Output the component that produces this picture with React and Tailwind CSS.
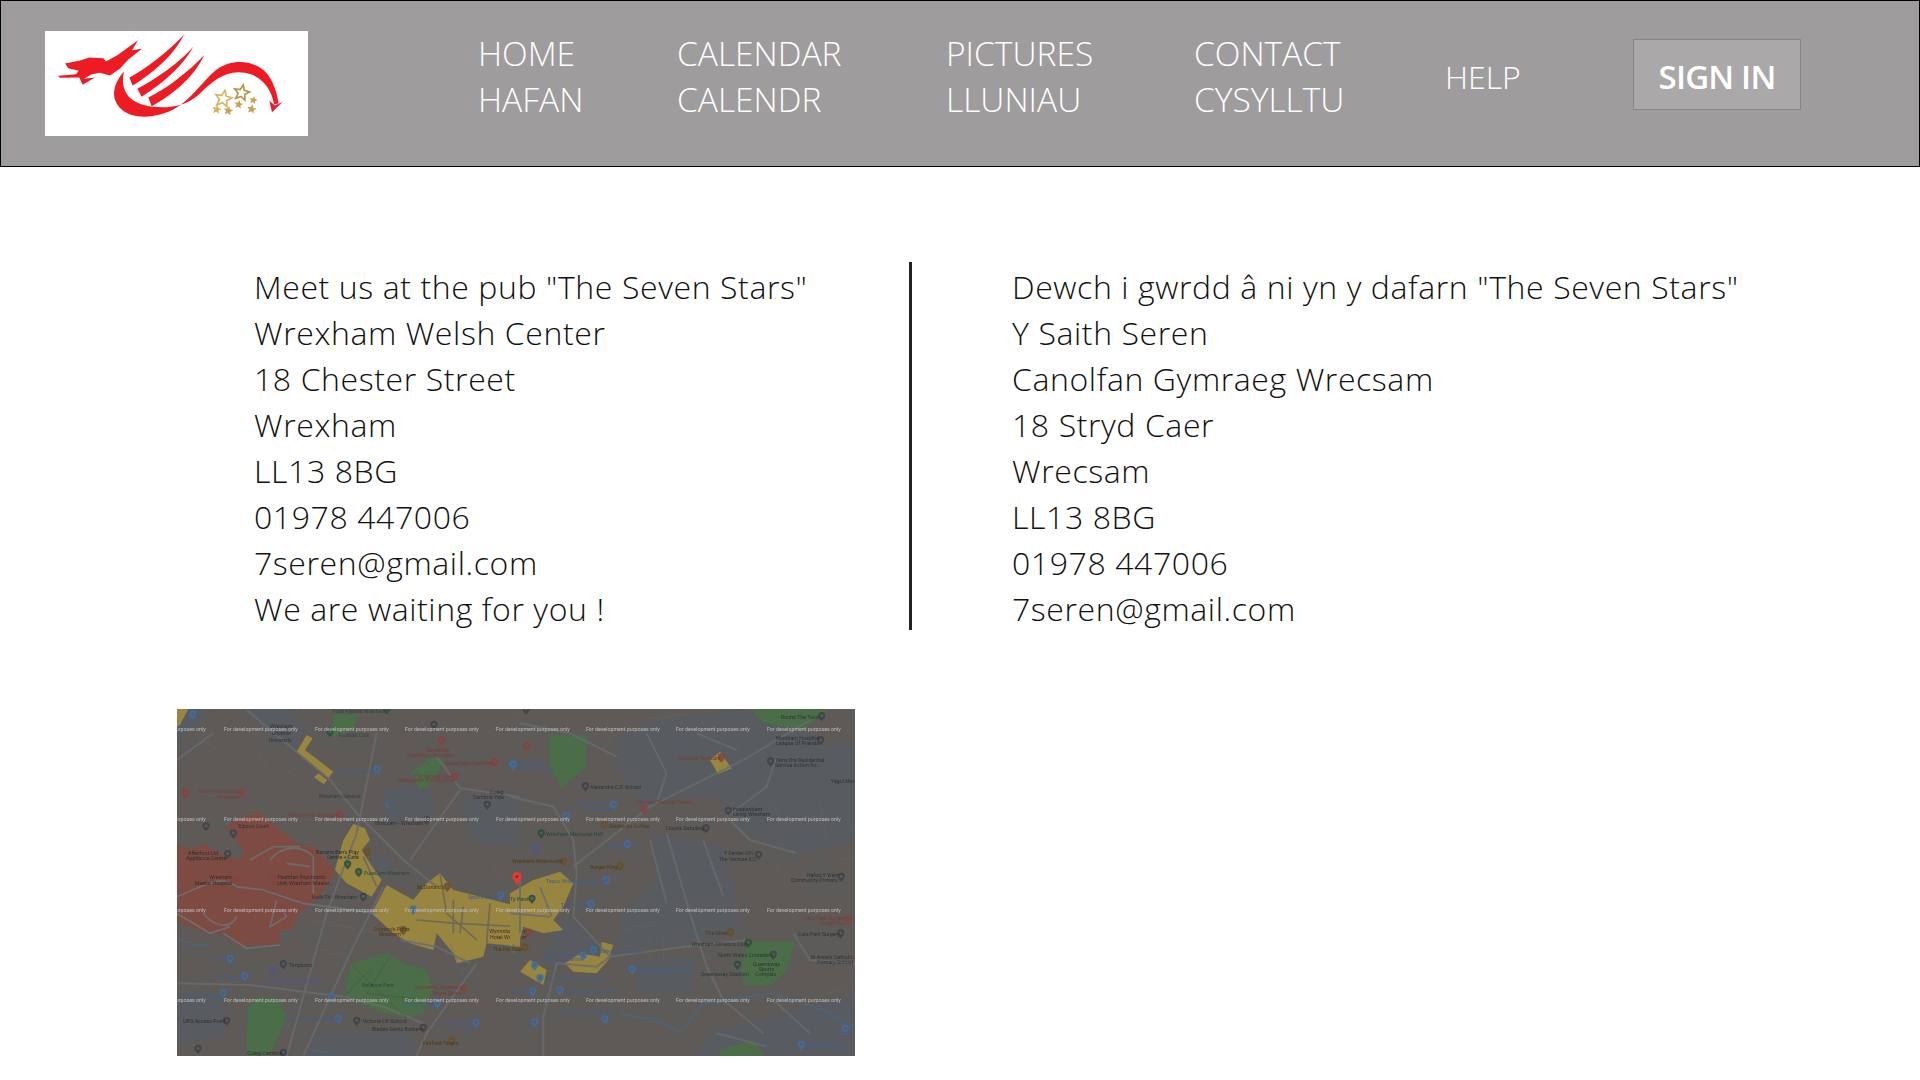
import React from 'react';

const FONT = "font-['Open_Sans','Noto_Sans',sans-serif]";

const english = [
  'Meet us at the pub "The Seven Stars"',
  'Wrexham Welsh Center',
  '18 Chester Street',
  'Wrexham',
  'LL13 8BG',
  '01978 447006',
  '7seren@gmail.com',
  'We are waiting for you !',
];

const welsh = [
  'Dewch i gwrdd â ni yn y dafarn "The Seven Stars"',
  'Y Saith Seren',
  'Canolfan Gymraeg Wrecsam',
  '18 Stryd Caer',
  'Wrecsam',
  'LL13 8BG',
  '01978 447006',
  '7seren@gmail.com',
];

const star = (cx, cy, r, fill, stroke) => {
  const pts = [];
  for (let i = 0; i < 10; i++) {
    const rad = i % 2 === 0 ? r : r * 0.45;
    const a = -Math.PI / 2 + (i * Math.PI) / 5 + 0.2;
    pts.push(`${cx + rad * Math.cos(a)},${cy + rad * Math.sin(a)}`);
  }
  return <polygon key={`${cx}-${cy}`} points={pts.join(' ')} fill={fill} stroke={stroke} strokeWidth={stroke ? 5 : 0} />;
};

const Logo = () => (
  <svg viewBox="135 93 789 314" className="w-[263px] h-[105px] bg-white shrink-0">
    <g fill="#ed1c24">
      <path d="M195 190 L240 181 L268 172 L310 174 L318 184 L352 165 L380 145 L414 120 L396 150 L426 146 L385 178 L360 205 L330 226 L300 218 L275 222 L252 236 L285 232 L248 254 L238 232 L180 233 L174 227 L228 222 L236 212 L205 204 Z" />
      <path d="M372 214 C340 250 328 295 365 328 C400 358 465 355 520 328 C575 298 605 245 650 208 C700 172 770 180 805 225 C825 255 832 285 836 310 L822 312 C815 270 790 228 735 218 C680 208 640 240 600 280 C560 318 510 325 460 320 C410 315 355 290 372 214 Z" />
      <path d="M808 302 L825 316 L848 305 L816 336 Z" />
      <path d="M388 232 C440 205 510 150 552 103 C525 160 465 215 398 256 Z" />
      <path d="M412 266 C470 235 535 190 580 140 C550 195 495 245 425 290 Z" />
      <path d="M445 292 C500 265 565 215 612 165 C585 225 525 280 455 318 Z" />
    </g>
    <g>
      {star(725, 278, 24, 'none', '#b8924a')}
      {star(670, 296, 26, 'none', '#d9b45c')}
      {star(760, 300, 13, '#c9a24f')}
      {star(716, 313, 14, '#c9a24f')}
      {star(650, 328, 15, '#d9b45c')}
      {star(685, 332, 15, '#c9a24f')}
      {star(755, 327, 15, '#c9a24f')}
    </g>
  </svg>
);

// map is drawn in the coordinates of two 3x crops, left and right half
const roads = [
  'M20 850 L240 855 L520 890 L640 920 L760 970',
  'M480 240 L560 340 L700 480 L800 560',
  'M870 270 L720 480',
  'M1050 290 L870 265 L800 170',
  'M640 560 L540 760 L400 1068',
  'M230 30 L480 240',
  'M20 180 L130 100',
  'M920 790 L770 1000 L740 1068',
  'M620 100 L560 400 L470 640 L350 1068',
  'M690 720 L800 740 L900 790',
];

const redRoads = [
  'M20 590 C100 560 150 520 200 560 L280 570 L400 610 L620 640',
  'M300 480 C330 440 390 430 430 470 L430 580',
  'M320 600 L300 680 L350 650 L330 620',
  'M100 640 C130 680 180 690 200 650',
  'M240 480 L310 440 L390 440 M350 490 L420 500',
  'M20 640 L120 700 L180 680',
  'M160 700 L230 745 L330 735',
];

const yellowRoads = [
  'M810 520 L830 640 L920 720',
  'M850 600 L850 700',
  'M880 620 L870 700',
  'M960 610 L950 730',
  'M1030 620 L1030 760',
  'M740 660 L860 670 L1050 680',
  'M580 470 L620 560',
];

const roadsRight = [
  'M0 290 L130 320 L190 420 L200 520 L190 650 L300 770 L260 800 L140 790 L100 950 L100 1068',
  'M190 500 L420 320 L700 180 L900 60',
  'M440 310 L470 220 L410 100',
  'M470 400 L540 640 L590 800 L640 900 L760 1000',
  'M300 770 L520 740 L720 720',
  'M850 700 L900 780 L1035 790',
  'M650 350 L770 260 L800 170 M660 360 L720 420 L860 460',
  'M580 420 L640 590 M420 420 L470 610',
  'M30 70 L180 100 L320 170',
  'M560 100 L680 150 M790 900 L900 1000 M620 1000 L770 1040',
  'M30 540 L30 700 M90 560 L125 650 M0 640 L120 650',
];

const pins = [
  [68, 45, '#3b6ea8'], [480, 98, '#25503c'], [650, 30, '#25503c'], [792, 76, '#3d4348'], [815, 123, '#8e3f3a'], [974, 187, '#8e3f3a'],
  [1030, 195, '#3b6ea8'], [622, 210, '#3b6ea8'], [854, 232, '#8e3f3a'], [216, 280, '#8e3f3a'], [46, 282, '#8e3f3a'], [952, 316, '#3d4348'],
  [510, 346, '#8e3f3a'], [770, 362, '#3d4348'], [108, 380, '#3d4348'], [190, 402, '#3d4348'], [173, 464, '#3d4348'], [592, 458, '#6b4f22'],
  [533, 495, '#25503c'], [566, 518, '#25503c'], [193, 538, '#8e3f3a'], [308, 540, '#8e3f3a'], [580, 592, '#3d4348'], [832, 562, '#6b4f22'],
  [992, 588, '#3b6ea8'], [730, 630, '#3b6ea8'], [338, 628, '#8e3f3a'], [700, 692, '#6b4f22'], [180, 778, '#3b6ea8'], [340, 794, '#3d4348'],
  [310, 814, '#4d5590'], [224, 830, '#3b6ea8'], [882, 868, '#8e3f3a'], [160, 882, '#3b6ea8'], [484, 892, '#3b6ea8'], [802, 912, '#3b6ea8'],
  [505, 958, '#3b6ea8'], [170, 964, '#3d4348'], [560, 964, '#3d4348'], [918, 970, '#3b6ea8'], [760, 985, '#3d4348'], [845, 1026, '#6b4f22'],
  [84, 1048, '#3d4348'], [340, 1060, '#3d4348'],
];

const pinsRight = [
  [48, 30, '#3d4348'], [935, 50, '#3d4348'], [932, 122, '#3d4348'], [50, 140, '#8e3f3a'], [634, 174, '#8e3f3a'], [782, 186, '#3d4348'],
  [8, 196, '#3b6ea8'], [226, 260, '#3d4348'], [310, 316, '#3b6ea8'], [402, 330, '#8e3f3a'], [655, 334, '#3d4348'], [168, 350, '#3b6ea8'],
  [282, 376, '#6b4f22'], [588, 386, '#3d4348'], [94, 402, '#25503c'], [352, 434, '#3b6ea8'], [76, 448, '#4d5590'], [746, 466, '#3d4348'],
  [160, 486, '#6b4f22'], [330, 500, '#6b4f22'], [994, 532, '#3d4348'], [288, 542, '#3b6ea8'], [66, 598, '#25503c'], [243, 614, '#3b6ea8'],
  [1016, 660, '#8e3f3a'], [992, 702, '#3d4348'], [662, 698, '#6b4f22'], [55, 700, '#8e3f3a'], [715, 730, '#25503c'], [45, 744, '#6b4f22'],
  [250, 752, '#3b6ea8'], [220, 768, '#3b6ea8'], [790, 766, '#3d4348'], [682, 796, '#25503c'], [366, 810, '#3b6ea8'], [74, 798, '#3b6ea8'],
  [90, 836, '#3b6ea8'], [150, 872, '#3b6ea8'], [68, 876, '#3b6ea8'], [285, 958, '#3b6ea8'], [74, 968, '#3b6ea8'], [1006, 988, '#3b6ea8'],
  [874, 1036, '#3b6ea8'],
];

const labels = [
  ['Total Fitness Wrexham', 486, 38, '#2b4a3a'], ['Wrexham', 300, 85, '#2f3438'], ['Glyndwr', 306, 106, '#2f3438'], ['University', 296, 126, '#2f3438'],
  ['Football Club', 505, 111, '#2b4a3a'], ['Rowlands', 768, 155, '#7a3c38'], ['Pharmacy Rhosddu', 712, 172, '#7a3c38'], ['Coed Celyn Hospital', 826, 194, '#7a3c38'],
  ['Jewson Wrexham', 494, 218, '#3f5f8c'], ['The Lemon Tree', 732, 233, '#7a3c38'], ['Restaurant With Rooms', 684, 247, '#7a3c38'], ['Total Orthodontics', 82, 280, '#7a3c38'],
  ['Wrexham', 142, 296, '#7a3c38'], ['Wrexham General', 446, 294, '#3a3d40'], ['Coleg', 960, 282, '#2f3438'], ['Cambria Yale', 908, 298, '#2f3438'],
  ['Premier Inn Wrexham', 354, 350, '#7a3c38'], ['Wrecsam - Wrexham', 614, 376, '#2f3438'], ['Edison Court', 205, 384, '#2f3438'], ['Banana Ben\'s Play', 438, 463, '#2b2f30'],
  ['Centre + Cafe', 470, 477, '#2b2f30'], ['Afterfoot Ltd', 54, 464, '#2b2f30'], ['Appliance Centre', 48, 480, '#2b2f30'], ['PureGym Wrexham', 582, 526, '#26483a'],
  ['Wrexham', 118, 538, '#3a2a28'], ['Maelor Hospital', 74, 554, '#3a2a28'], ['Heddfan Psychiatric', 324, 538, '#3a2a28'], ['Unit, Wrexham Maelor...', 322, 555, '#3a2a28'],
  ['McDonald\'s', 740, 568, '#4f3a18'], ['Sports Direct', 894, 596, '#3f5f8c'], ['Kwik Fit - Wrexham', 426, 598, '#2f3438'], ['Domino\'s Pizza', 612, 692, '#4f3a18'],
  ['Wrexham', 626, 708, '#4f3a18'], ['Wynnstay Arms', 958, 700, '#4f2a28'], ['Hotel Wrexham', 960, 716, '#4f2a28'], ['The Fat Boar', 968, 752, '#4f3a18'],
  ['ALDI', 136, 784, '#3f5f8c'], ['Timpsons', 356, 800, '#2f3438'], ['Morrisons', 144, 838, '#3f5f8c'], ['Morrisons Petrol Station', 286, 848, '#4d5590'],
  ['Bellevue Park', 576, 862, '#2b4a3a'], ['Rowlands Pharmacy', 736, 868, '#7a3c38'], ['Chapel Street', 780, 884, '#7a3c38'], ['Bryn Offa Stores', 40, 890, '#3f5f8c'],
  ['Chalo Polska', 702, 918, '#3f5f8c'], ['UPS Access Point', 40, 970, '#2b2f30'], ['Victoria Premier Stores', 338, 964, '#3f5f8c'], ['Victoria CP School', 578, 970, '#2f3438'],
  ['Co-op Food -', 818, 972, '#3f5f8c'], ['Poplar Road', 826, 988, '#3f5f8c'], ['Blades Gents Barbers', 606, 992, '#2f3438'], ['Fairfield Tavern', 758, 1034, '#4f3a18'],
  ['Coleg Cambria', 232, 1064, '#2b2f30'],
];

const labelsRight = [
  ['Round The Twist', 812, 58, '#2f3438'], ['Wrexham Hospital', 797, 121, '#2f3438'], ['League Of Friends', 798, 136, '#2f3438'], ['Absolute Footcare', 502, 181, '#7a3c38'],
  ['Tainy Dre Residential', 795, 186, '#2f3438'], ['Service Action for...', 795, 200, '#2f3438'], ['Nightingale', 24, 195, '#3f5f8c'], ['House Hospice', 24, 211, '#3f5f8c'],
  ['Alexandra C.P. School', 240, 266, '#2f3438'], ['Yagol Morgan', 962, 250, '#2f3438'], ['Aldi Wrexham', 196, 316, '#3f5f8c'], ['Superstore', 224, 332, '#3f5f8c'],
  ['Hillcrest Medical Centre', 378, 312, '#7a3c38'], ['Independent', 668, 334, '#2f3438'], ['Living Wrexham', 668, 348, '#2f3438'], ['Starbucks Coffee', 296, 383, '#4f3a18'],
  ['Lloyd\'s Detailing', 468, 391, '#2f3438'], ['Wrexham Memorial Hall', 108, 408, '#26483a'], ['Nickies', 290, 440, '#3f5f8c'], ['Y Fenter CP/', 642, 466, '#2f3438'],
  ['The Venture ICC', 626, 482, '#2f3438'], ['Wrexham Waterworld', 6, 490, '#4f3a18'], ['Burger King', 240, 506, '#4f3a18'], ['Hafod Y Wern', 890, 532, '#2f3438'],
  ['Community Primary...', 842, 546, '#2f3438'], ['Tesco Wrexham Car Park', 108, 548, '#3f5f8c'], ['Ty Pawb', 0, 604, '#26483a'], ['Tesco Extra', 152, 620, '#3f5f8c'],
  ['Cala Park Surgery:', 882, 660, '#7a3c38'], ['Dr MM Rao', 930, 674, '#7a3c38'], ['Cala Park Surgery', 864, 708, '#2f3438'], ['The Diner', 586, 705, '#4f3a18'],
  ['Wrexham Athletics Club', 544, 737, '#2b3a34'], ['Marks and Spencer', 264, 760, '#3f5f8c'], ['Eagles Meadow', 102, 767, '#3f5f8c'], ['Shopping Centre', 100, 782, '#3f5f8c'],
  ['North Wales Crusaders', 624, 772, '#2b3a34'], ['St Anne\'s Catholic', 902, 776, '#2f3438'], ['Primary School', 922, 792, '#2f3438'], ['Queensway', 728, 798, '#2b3a34'],
  ['Sports', 746, 812, '#2b3a34'], ['Complex', 736, 828, '#2b3a34'], ['Queensway Stadium', 572, 828, '#2b3a34'], ['Travis Perkins Wrexham', 382, 816, '#3f5f8c'],
  ['Euro Car Parts, Wrexham', 104, 842, '#3f5f8c'], ['Toolstation Wrexham', 164, 878, '#3f5f8c'], ['Matalan', 2, 882, '#3f5f8c'], ['Wolseley Plumb & Parts', 152, 940, '#3f5f8c'],
  ['Lidl', 40, 974, '#3f5f8c'], ['asylum designs', 888, 1042, '#3f5f8c'],
];

const Pin = ({ x, y, c }) => (
  <g opacity="0.85">
    <path d={`M${x - 11} ${y - 3} a11 11 0 1 1 22 0 c0 7 -7 11 -11 17 c-4 -6 -11 -10 -11 -17 Z`} fill={c} />
    <circle cx={x} cy={y - 3} r="4.5" fill="#5d5b5a" />
  </g>
);

const Labels = ({ items }) =>
  items.map(([text, x, y, c]) => (
    <text key={`${text}-${x}`} x={x} y={y} fill={c} fontSize="16" fontFamily="Roboto, sans-serif">
      {text}
    </text>
  ));

const watermarkRows = [20, 110, 201, 291];
const watermarkCols = [-45, 47, 138, 228, 319, 409, 499, 590];

const MapImage = () => (
  <svg viewBox="0 0 678 347" className="w-[678px] h-[347px] block blur-[0.5px]">
    <rect width="678" height="347" fill="#5e5a57" />
    {/* left half */}
    <g transform="translate(-7 -9) scale(0.3333)">
      <g fill="#585b5f">
        <path d="M230 27 L360 27 L420 110 L380 150 L300 120 Z" />
        <path d="M20 890 L160 890 L160 1010 L20 1030 Z" />
        <path d="M880 290 L1050 290 L1050 440 L930 430 L880 360 Z" />
        <path d="M590 480 L660 470 L670 530 L610 520 Z" />
        <path d="M640 270 L780 250 L800 350 L640 370 Z" />
        <path d="M420 1000 L720 1000 L740 1068 L420 1068 Z" />
        <path d="M20 27 L130 27 L60 100 L20 130 Z" />
      </g>
      <path d="M20 430 L55 450 L105 432 L160 465 L210 480 L225 455 L165 378 L262 335 L385 432 L440 445 L497 515 L440 600 L385 640 L365 690 L330 690 L328 735 L270 735 L215 740 L150 700 L100 695 L20 665 Z" fill="#7e4b43" />
      <g fill="#98853f">
        <path d="M380 155 L410 105 L428 115 L405 150 L490 215 L475 235 Z" />
        <path d="M432 232 L445 220 L472 240 L462 253 Z" />
        <path d="M20 27 L55 27 L30 75 L20 80 Z" />
        <path d="M495 510 L520 420 L550 372 L585 385 L600 420 L575 450 L600 490 L635 540 L605 590 L530 550 Z" />
        <path d="M605 640 L650 555 L730 600 L770 550 L810 520 L850 570 L970 600 L1050 620 L1050 740 L950 730 L940 770 L860 790 L850 760 L800 700 L790 750 L720 730 L670 700 Z" />
      </g>
      <g fill="#4b6d48">
        <path d="M490 45 L565 45 L550 90 L485 110 Z" />
        <path d="M725 215 L780 175 L830 180 L770 265 L745 265 Z" />
        <path d="M540 790 L655 760 L700 790 L770 810 L790 870 L760 940 L710 955 L630 935 L525 890 Z" />
        <path d="M232 925 L265 890 L320 895 L350 950 L300 1068 L230 1068 Z" />
      </g>
      <path d="M165 362 L180 372 L170 376 Z M645 300 L662 325 L648 322 Z" fill="#3f6a94" />
      <path d="M20 715 L60 735 L110 735 M420 1050 L480 1060" stroke="#3f6a94" strokeWidth="3" fill="none" />
      <g stroke="#696c6f" strokeWidth="6" fill="none" opacity="0.8">
        {roads.map((d) => <path key={d} d={d} />)}
      </g>
      <g stroke="#6b7478" strokeWidth="5" fill="none" opacity="0.85">
        {redRoads.map((d) => <path key={d} d={d} />)}
      </g>
      <g stroke="#70695a" strokeWidth="5" fill="none">
        {yellowRoads.map((d) => <path key={d} d={d} />)}
      </g>
      <g stroke="#666767" strokeWidth="2" fill="none" opacity="0.7">
        <path d="M100 120 L170 175 M250 130 L300 220 M340 230 L380 200 M960 480 L1000 540 M430 660 L620 700 M460 750 L540 770 M840 730 L880 830 M950 100 L1050 40 M30 1000 L100 1060" />
      </g>
      <path d="M540 790 L710 955 M600 810 L520 890 M660 770 L590 880 L760 900" stroke="#3f5c40" strokeWidth="2" fill="none" />
      {pins.map(([x, y, c]) => <Pin key={`${x}-${y}`} x={x} y={y} c={c} />)}
      <Labels items={labels} />
    </g>
    {/* right half */}
    <g transform="translate(333 -9) scale(0.3333)">
      <g fill="#585b5f">
        <path d="M320 110 L450 60 L720 27 L960 130 L1035 130 L1035 420 L860 470 L700 390 L640 300 L520 280 L400 330 L320 200 Z" />
        <path d="M430 400 L640 440 L700 700 L560 720 L340 760 L330 640 L440 540 Z" />
        <path d="M380 780 L560 770 L540 880 L380 880 Z" />
        <path d="M600 1000 L1035 880 L1035 1068 L560 1068 Z" />
        <path d="M120 660 L190 660 L300 760 L200 780 L120 740 Z" />
        <path d="M0 300 L30 300 L30 420 L0 420 Z" />
      </g>
      <g fill="#98853f">
        <path d="M0 580 L70 540 L150 515 L190 550 L160 620 L130 660 L160 690 L100 700 L40 680 L30 720 L0 740 Z" />
        <path d="M600 180 L630 155 L665 205 L625 222 Z" />
        <path d="M165 790 L210 760 L270 770 L275 725 L310 735 L295 780 L260 820 L190 815 Z" />
        <path d="M30 815 L60 780 L110 810 L100 855 Z" />
      </g>
      <g fill="#4b6d48">
        <path d="M118 105 L230 105 L228 200 L155 265 L118 200 Z" />
        <path d="M720 27 L960 27 L880 90 L760 70 Z" />
        <path d="M715 725 L855 725 L830 810 L780 855 L700 855 L695 790 Z" />
        <path d="M630 1050 L730 1020 L760 1068 L630 1068 Z" />
      </g>
      <path d="M330 940 L430 960 L510 995 L580 910 L780 880 L940 930 L1035 980" stroke="#3f6a94" strokeWidth="3" fill="none" />
      <g stroke="#696c6f" strokeWidth="6" fill="none" opacity="0.8">
        {roadsRight.map((d) => <path key={d} d={d} />)}
      </g>
      <g stroke="#666767" strokeWidth="2" fill="none" opacity="0.7">
        <path d="M420 60 L530 40 M280 150 L310 100 M350 170 L380 130 M620 280 L680 250 M780 290 L820 380 M930 310 L950 420 M1010 400 L1035 390 M980 480 L1030 470 M790 480 L810 520 M420 700 L420 790 M460 710 L460 790 M340 690 L450 670 M250 590 L250 620 M900 900 L1035 850 M1020 800 L1030 900 M370 970 L400 990" />
      </g>
      {pinsRight.map(([x, y, c]) => <Pin key={`r-${x}-${y}`} x={x} y={y} c={c} />)}
      <Labels items={labelsRight} />
    </g>
    {/* main marker */}
    <path d="M340 163 a4.6 4.6 0 0 0 -4.6 4.6 c0 3.6 3.2 4.8 4.6 9.4 c1.4 -4.6 4.6 -5.8 4.6 -9.4 a4.6 4.6 0 0 0 -4.6 -4.6 Z" fill="#e03c36" />
    <circle cx="340" cy="167.6" r="1.2" fill="#7a1a16" />
    {watermarkRows.map((y) =>
      watermarkCols.map((x) => (
        <text key={`${x}-${y}`} x={x} y={y + 2} fontSize="5.3" fill="#c0bebc" fontFamily="Roboto, sans-serif">
          For development purposes only
        </text>
      ))
    )}
  </svg>
);

const NavLink = ({ top, bottom, className }) => (
  <a className={`block mb-[15px] text-white text-[33.5px] leading-[46px] font-light ${className}`}>
    <div>{top}</div>
    <div>{bottom}</div>
  </a>
);

const TextBlock = ({ lines }) => (
  <div className="pt-[2px] -mb-[2px] text-[32px] leading-[46px] font-light text-[#111] tracking-[0.6px] whitespace-nowrap">
    {lines.map((line) => (
      <div key={line}>{line}</div>
    ))}
  </div>
);

export default function App() {
  return (
    <div className={`${FONT} bg-white min-h-[1080px] overflow-hidden`}>
      <header className="h-[167px] bg-[#9e9c9d] border border-black flex items-center pl-[44px]">
        <Logo />
        <nav className="flex items-center ml-[170px]">
          <NavLink top="HOME" bottom="HAFAN" className="w-[199px]" />
          <NavLink top="CALENDAR" bottom="CALENDR" className="w-[269px]" />
          <NavLink top="PICTURES" bottom="LLUNIAU" className="w-[248px]" />
          <NavLink top="CONTACT" bottom="CYSYLLTU" className="w-[251px]" />
          <a className="block w-[188px] mb-[14px] text-white text-[32px] leading-[46px] font-light">HELP</a>
          <button className="w-[168px] h-[71px] mb-[18px] pt-[4px] bg-[#aaa8a9] border border-[#858585] text-white text-[33px] font-semibold tracking-[-0.8px] text-center">
            SIGN IN
          </button>
        </nav>
      </header>

      <main className="pt-[95px]">
        <section className="flex items-stretch">
          <div className="w-[909px] pl-[254px] shrink-0">
            <TextBlock lines={english} />
          </div>
          <div className="w-[3px] bg-[#222] shrink-0" />
          <div className="pl-[100px]">
            <TextBlock lines={welsh} />
          </div>
        </section>
        <div className="mt-[79px] ml-[177px] w-[678px]">
          <MapImage />
        </div>
      </main>
    </div>
  );
}
